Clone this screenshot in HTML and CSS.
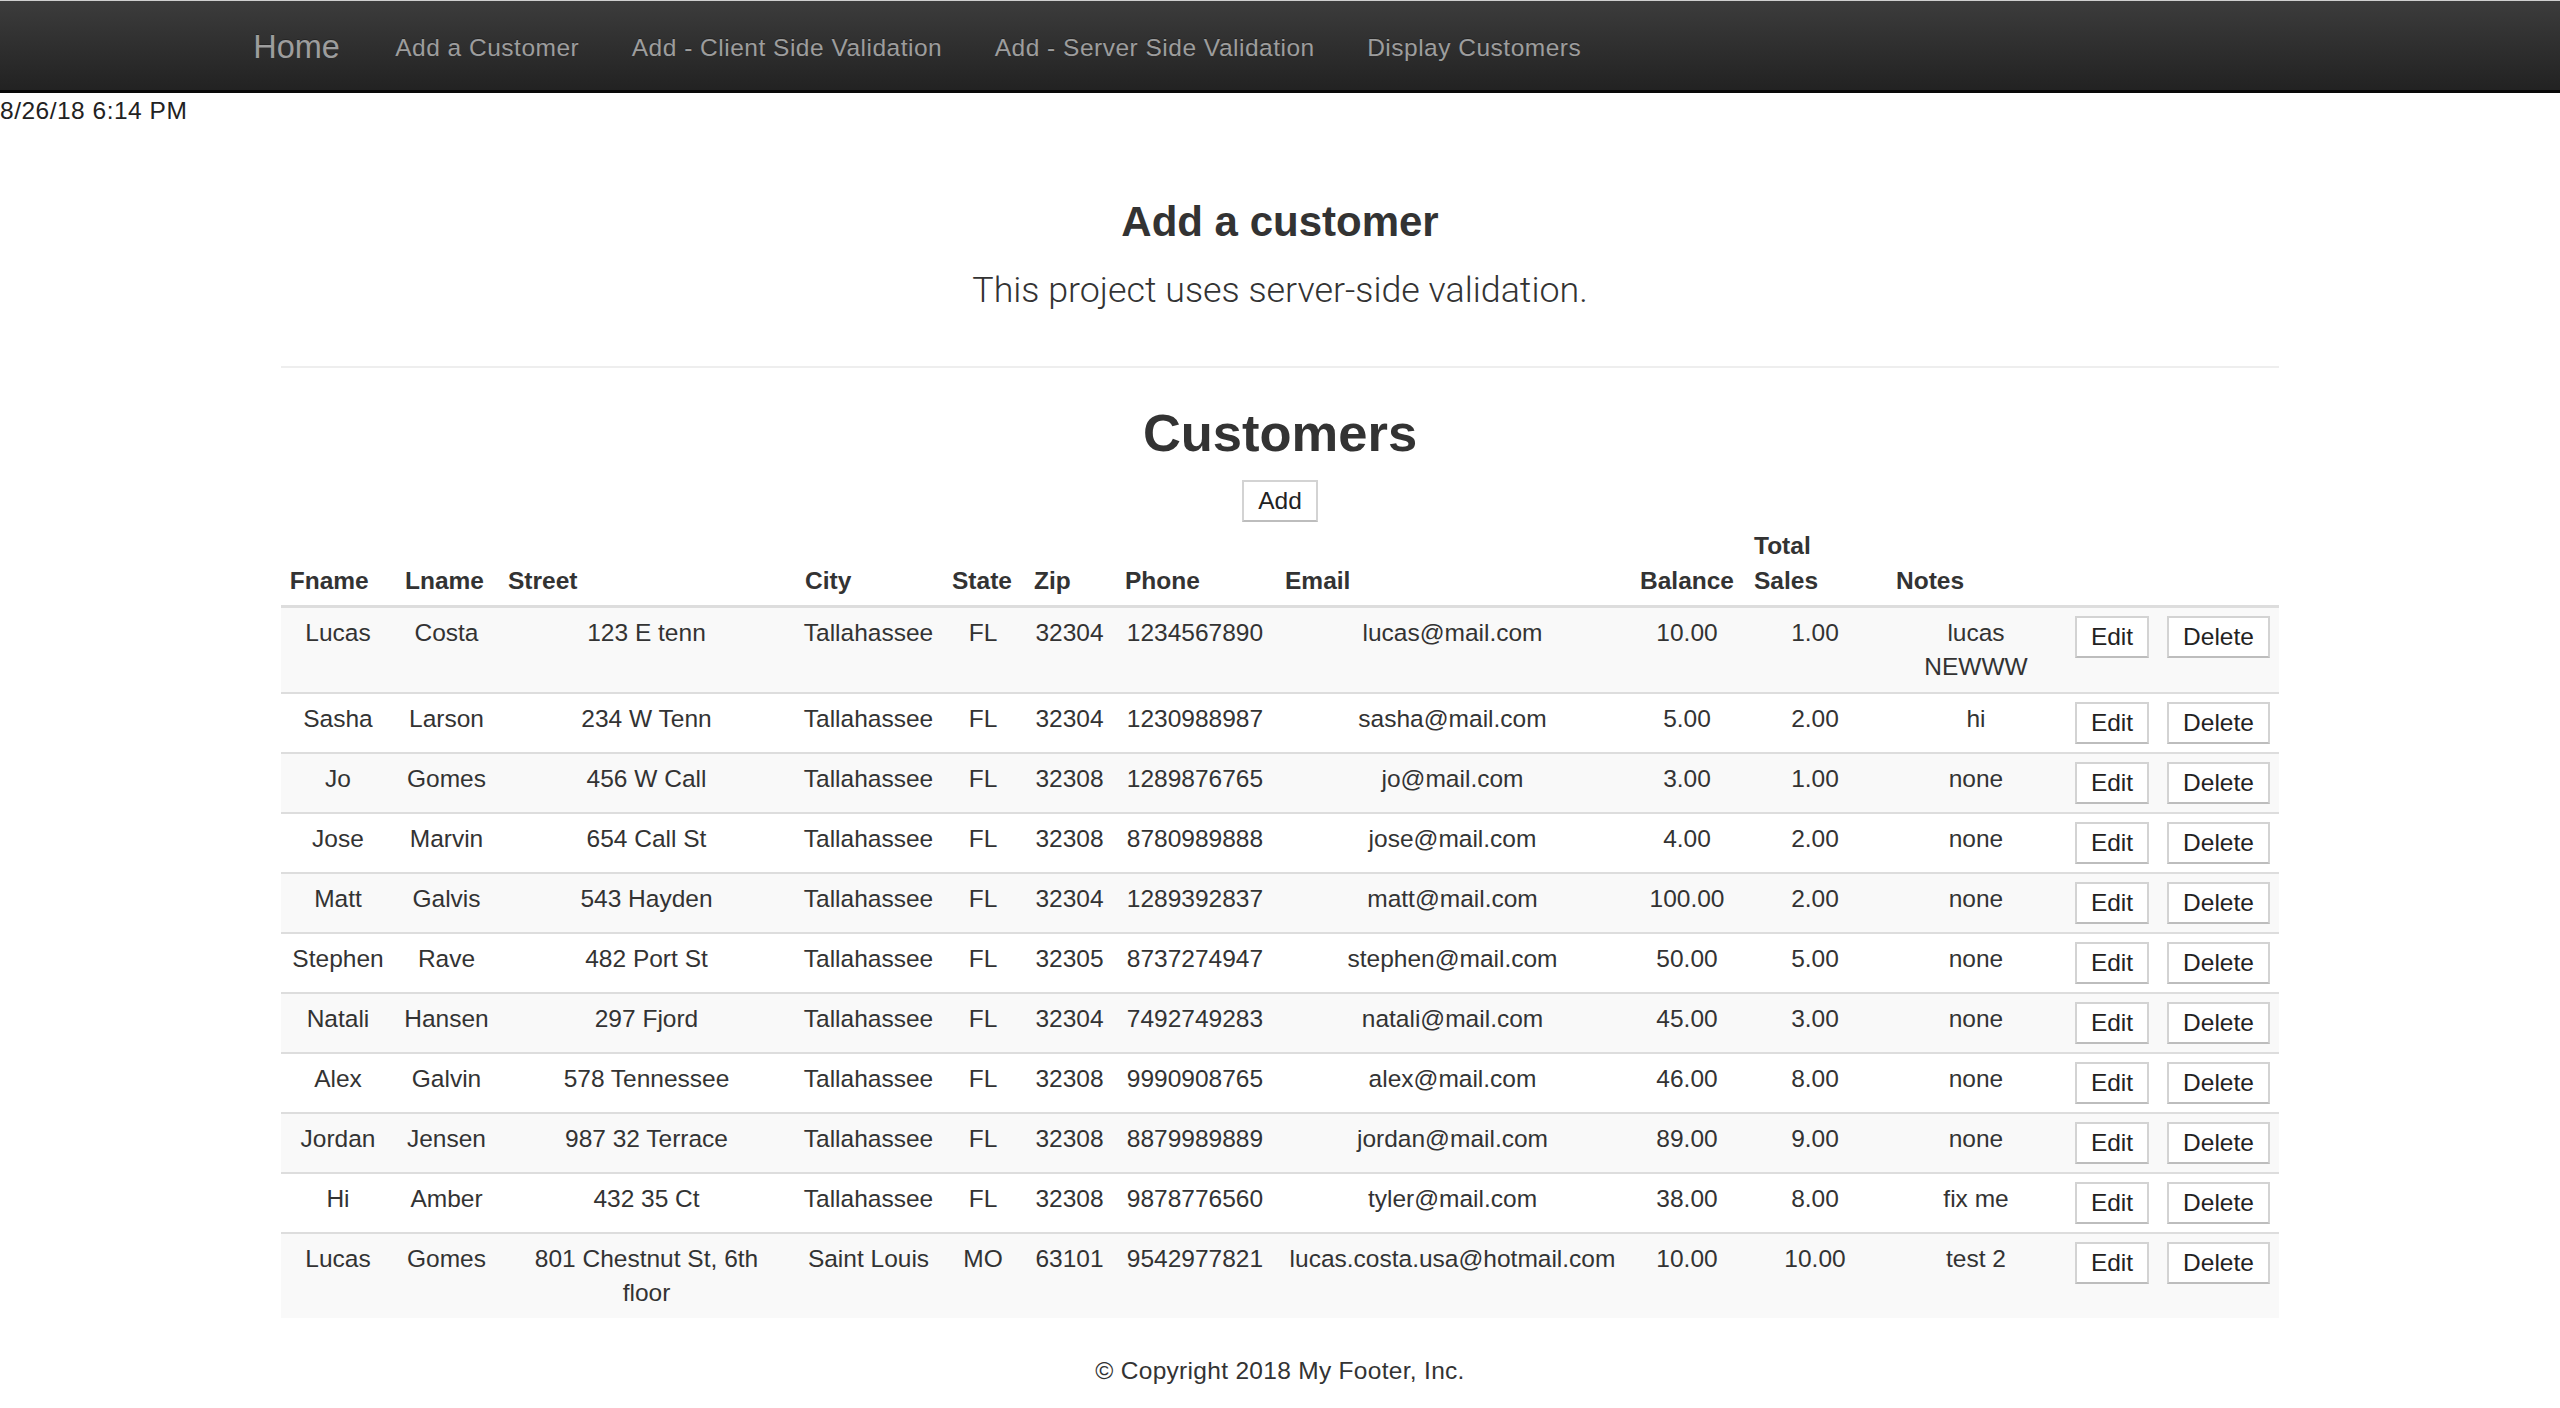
FILE: index.html
```html
<!DOCTYPE html>
<html lang="en">
<head>
<meta charset="utf-8">
<title>Customers</title>
<link rel="stylesheet" href="styles.css">
</head>
<body>
<nav class="navbar">
  <div class="nav-inner">
    <a class="brand" href="#">Home</a>
    <a class="nav-link" href="#">Add a Customer</a>
    <a class="nav-link" href="#">Add - Client Side Validation</a>
    <a class="nav-link" href="#">Add - Server Side Validation</a>
    <a class="nav-link" href="#">Display Customers</a>
  </div>
</nav>
<div class="date">8/26/18 6:14 PM</div>
<main class="container">
  <h3 class="title">Add a customer</h3>
  <p class="lead">This project uses server-side validation.</p>
  <hr class="divider">
  <h2 class="section-title">Customers</h2>
  <div class="add-wrap"><button class="btn">Add</button></div>
  <table class="table">
    <colgroup>
      <col class="c-fname"><col class="c-lname"><col class="c-street"><col class="c-city"><col class="c-state"><col class="c-zip"><col class="c-phone"><col class="c-email"><col class="c-bal"><col class="c-sales"><col class="c-notes"><col class="c-edit"><col class="c-del">
    </colgroup>
    <thead>
      <tr><th>Fname</th><th>Lname</th><th>Street</th><th>City</th><th>State</th><th>Zip</th><th>Phone</th><th>Email</th><th>Balance</th><th>Total Sales</th><th>Notes</th><th></th><th></th></tr>
    </thead>
    <tbody>
      <tr><td>Lucas</td><td>Costa</td><td class="street">123 E tenn</td><td>Tallahassee</td><td>FL</td><td>32304</td><td>1234567890</td><td>lucas@mail.com</td><td>10.00</td><td>1.00</td><td class="notes">lucas NEWWW</td><td><button class="btn">Edit</button></td><td><button class="btn">Delete</button></td></tr>
      <tr><td>Sasha</td><td>Larson</td><td class="street">234 W Tenn</td><td>Tallahassee</td><td>FL</td><td>32304</td><td>1230988987</td><td>sasha@mail.com</td><td>5.00</td><td>2.00</td><td class="notes">hi</td><td><button class="btn">Edit</button></td><td><button class="btn">Delete</button></td></tr>
      <tr><td>Jo</td><td>Gomes</td><td class="street">456 W Call</td><td>Tallahassee</td><td>FL</td><td>32308</td><td>1289876765</td><td>jo@mail.com</td><td>3.00</td><td>1.00</td><td class="notes">none</td><td><button class="btn">Edit</button></td><td><button class="btn">Delete</button></td></tr>
      <tr><td>Jose</td><td>Marvin</td><td class="street">654 Call St</td><td>Tallahassee</td><td>FL</td><td>32308</td><td>8780989888</td><td>jose@mail.com</td><td>4.00</td><td>2.00</td><td class="notes">none</td><td><button class="btn">Edit</button></td><td><button class="btn">Delete</button></td></tr>
      <tr><td>Matt</td><td>Galvis</td><td class="street">543 Hayden</td><td>Tallahassee</td><td>FL</td><td>32304</td><td>1289392837</td><td>matt@mail.com</td><td>100.00</td><td>2.00</td><td class="notes">none</td><td><button class="btn">Edit</button></td><td><button class="btn">Delete</button></td></tr>
      <tr><td>Stephen</td><td>Rave</td><td class="street">482 Port St</td><td>Tallahassee</td><td>FL</td><td>32305</td><td>8737274947</td><td>stephen@mail.com</td><td>50.00</td><td>5.00</td><td class="notes">none</td><td><button class="btn">Edit</button></td><td><button class="btn">Delete</button></td></tr>
      <tr><td>Natali</td><td>Hansen</td><td class="street">297 Fjord</td><td>Tallahassee</td><td>FL</td><td>32304</td><td>7492749283</td><td>natali@mail.com</td><td>45.00</td><td>3.00</td><td class="notes">none</td><td><button class="btn">Edit</button></td><td><button class="btn">Delete</button></td></tr>
      <tr><td>Alex</td><td>Galvin</td><td class="street">578 Tennessee</td><td>Tallahassee</td><td>FL</td><td>32308</td><td>9990908765</td><td>alex@mail.com</td><td>46.00</td><td>8.00</td><td class="notes">none</td><td><button class="btn">Edit</button></td><td><button class="btn">Delete</button></td></tr>
      <tr><td>Jordan</td><td>Jensen</td><td class="street">987 32 Terrace</td><td>Tallahassee</td><td>FL</td><td>32308</td><td>8879989889</td><td>jordan@mail.com</td><td>89.00</td><td>9.00</td><td class="notes">none</td><td><button class="btn">Edit</button></td><td><button class="btn">Delete</button></td></tr>
      <tr><td>Hi</td><td>Amber</td><td class="street">432 35 Ct</td><td>Tallahassee</td><td>FL</td><td>32308</td><td>9878776560</td><td>tyler@mail.com</td><td>38.00</td><td>8.00</td><td class="notes">fix me</td><td><button class="btn">Edit</button></td><td><button class="btn">Delete</button></td></tr>
      <tr><td>Lucas</td><td>Gomes</td><td class="street">801 Chestnut St, 6th floor</td><td>Saint Louis</td><td>MO</td><td>63101</td><td>9542977821</td><td>lucas.costa.usa@hotmail.com</td><td>10.00</td><td>10.00</td><td class="notes">test 2</td><td><button class="btn">Edit</button></td><td><button class="btn">Delete</button></td></tr>
    </tbody>
  </table>
  <footer class="footer">© Copyright 2018 My Footer, Inc.</footer>
</main>
</body>
</html>
```

FILE: styles.css
```css
* { box-sizing: border-box; }

html, body {
  margin: 0;
  padding: 0;
  background: #fff;
}

body {
  font-family: "Liberation Sans", Arial, Helvetica, sans-serif;
  font-size: 24.5px;
  line-height: 35px;
  color: #333;
}

/* Navbar */
.navbar {
  height: 93px;
  border-top: 1px solid #cfcfcf;
  border-bottom: 3px solid #080808;
  background: linear-gradient(to bottom, #3c3c3c 0%, #222 100%);
}

.nav-inner {
  height: 100%;
  display: flex;
  align-items: center;
  padding: 4px 0 0 227px;
}

.brand,
.nav-link {
  color: #9d9d9d;
  text-decoration: none;
  padding: 0 26.25px;
  text-shadow: 0 -1px 0 rgba(0, 0, 0, 0.25);
}

.brand {
  font-size: 32.5px;
  line-height: 35px;
  padding-right: 29px;
}

.nav-link {
  font-size: 24.5px;
  line-height: 35px;
  letter-spacing: 0.5px;
}

/* Date */
.date {
  color: #222;
  line-height: 35px;
  letter-spacing: 0.5px;
}

/* Main */
.container {
  width: 1998px;
  margin: 0 auto;
}

.title {
  margin: 71px 0 0;
  font-size: 42px;
  line-height: 46px;
  font-weight: 700;
  text-align: center;
  color: #333;
}

.lead {
  margin: 19px 0 0;
  font-family: Roboto, "Liberation Sans", Arial, sans-serif;
  font-weight: 300;
  font-size: 35.8px;
  line-height: 52.5px;
  text-align: center;
  color: #333;
}

.divider {
  margin: 49px 0 0;
  border: 0;
  border-top: 2px solid #eee;
  height: 0;
}

.section-title {
  margin: 36px 0 0;
  font-size: 52.5px;
  line-height: 58px;
  font-weight: 700;
  text-align: center;
  color: #333;
}

.add-wrap {
  display: flex;
  justify-content: center;
  margin-top: 18px;
}

.btn {
  font-family: "Liberation Sans", Arial, Helvetica, sans-serif;
  font-size: 24.5px;
  line-height: 28px;
  height: 42px;
  padding: 5px 14px;
  margin: 0;
  color: #222;
  background: #fff;
  border: 2px solid #d3d3d3;
  border-bottom-color: #bdbdbd;
  border-radius: 0;
  vertical-align: top;
  cursor: pointer;
}

/* Table */
.table {
  width: 1998px;
  table-layout: fixed;
  border-collapse: collapse;
  border-spacing: 0;
  margin: 0 0 35px;
}

.c-fname { width: 114px; }
.c-lname { width: 103px; }
.c-street { width: 297px; }
.c-city { width: 147px; }
.c-state { width: 82px; }
.c-zip { width: 91px; }
.c-phone { width: 160px; }
.c-email { width: 355px; }
.c-bal { width: 114px; }
.c-sales { width: 142px; }
.c-notes { width: 180px; }
.c-edit { width: 92px; }
.c-del { width: 121px; }

.table th {
  text-align: left;
  vertical-align: bottom;
  font-weight: 700;
  line-height: 35px;
  padding: 6px 8.75px 7.75px;
  border-bottom: 3px solid #ddd;
  color: #333;
}

.table th:nth-child(n+2) {
  padding-left: 10px;
}

.table td {
  text-align: center;
  vertical-align: top;
  line-height: 34px;
  padding: 8px 8.75px;
  border-top: 2px solid #ddd;
}

.table td.street {
  padding-left: 14px;
  padding-right: 14px;
}

.table td.notes {
  padding-left: 10px;
  padding-right: 10px;
}

.table tbody tr:nth-child(odd) {
  background: #f9f9f9;
}

/* Footer */
.footer {
  text-align: center;
  line-height: 35px;
  letter-spacing: 0.3px;
  color: #333;
}
```
